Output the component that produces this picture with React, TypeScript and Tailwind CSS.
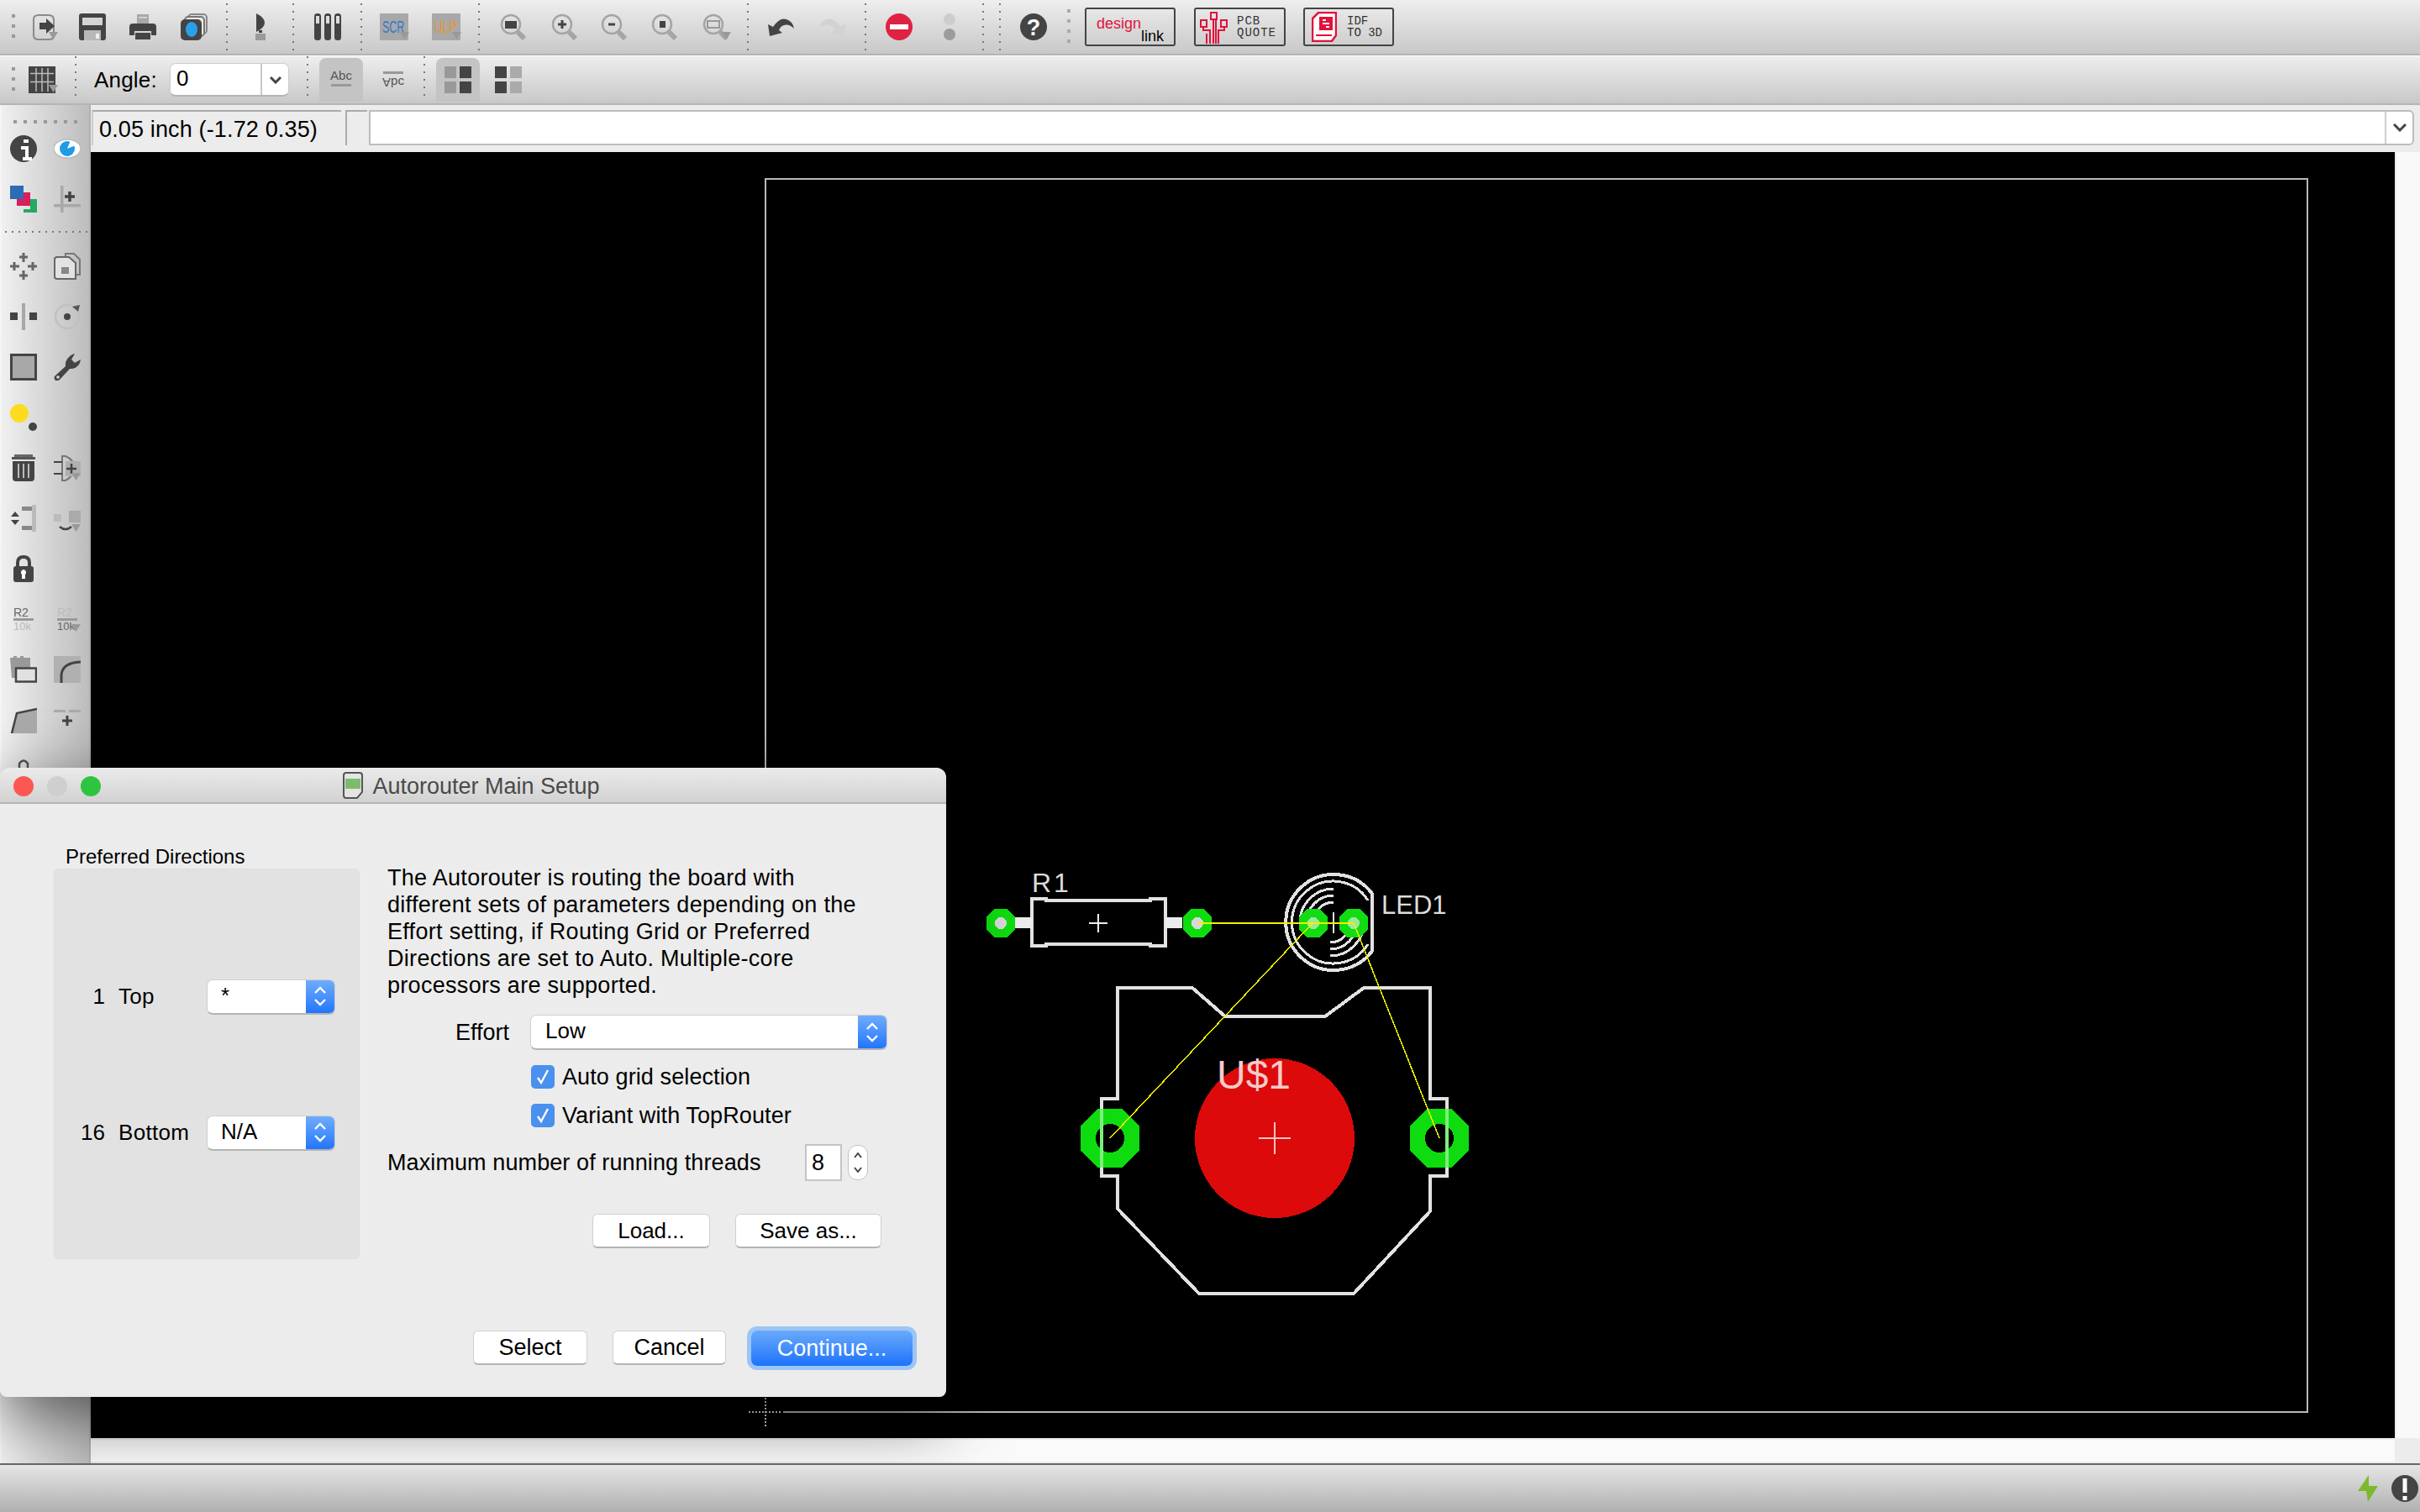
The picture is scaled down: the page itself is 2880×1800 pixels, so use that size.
import type { ReactNode } from 'react';

const DARK = '#444';
const MID = '#a8a8a8';

const Icon = (props: { w?: number, className?: string, children: ReactNode }) => {
  const w = props.w ?? 32;
  return (
    <svg width={w} height={32} viewBox={`0 0 ${w} 32`} className={`block shrink-0 ${props.className ?? ''}`}>
      {props.children}
    </svg>
  );
};

// Toolbar dotted divider
const Sep = (props: { className: string }) => (
  <div className={`w-[2px] h-[56px] self-start mt-[4px] shrink-0 bg-[repeating-linear-gradient(to_bottom,#777_0,#777_2px,transparent_2px,transparent_9px)] ${props.className}`} />
);

const Grip = (props: { className: string }) => (
  <div className={`w-[4px] h-[30px] shrink-0 bg-[repeating-linear-gradient(to_bottom,#999_0,#999_4px,transparent_4px,transparent_12px)] ${props.className}`} />
);

const Arrow = (props: { x: number, y?: number }) => (
  <polygon points={`${props.x},${props.y ?? 22} ${props.x + 11},${props.y ?? 22} ${props.x + 5.5},${(props.y ?? 22) + 9}`} fill="#999" />
);

const ZoomIcon = (props: { className: string, w?: number, arrow?: boolean, children?: ReactNode }) => (
  <Icon w={props.w} className={props.className}>
    <circle cx="14" cy="13" r="11" fill="none" stroke="#a5a5a5" strokeWidth="2.5" />
    <line x1="22" y1="22" x2="30" y2="30" stroke="#a5a5a5" strokeWidth="6" />
    {props.children}
    {props.arrow && <Arrow x={24} />}
  </Icon>
);

const Stepper = () => (
  <svg width="16" height="26" viewBox="0 0 16 26" className="block">
    <path d="M2 9 L8 3 L14 9 M2 17 L8 23 L14 17" fill="none" stroke="white" strokeWidth="2.4" />
  </svg>
);

const Select = (props: { value: string, className: string, textClass: string }) => (
  <div className={`flex h-[42px] rounded-[7px] bg-white border-t border-x border-[#cfcfcf] border-b-2 border-b-[#b4b4b4] overflow-hidden ${props.className}`}>
    <div className={`flex-1 text-[26px] leading-[36px] ${props.textClass}`}>{props.value}</div>
    <div className="w-[34px] -my-[2px] flex items-center justify-center bg-gradient-to-b from-[#72aefc] to-[#1b72fb]">
      <Stepper />
    </div>
  </div>
);

const Check = (props: { label: string, className: string }) => (
  <div className={`flex items-center h-[28px] ml-[171px] ${props.className}`}>
    <div className="w-[28px] h-[28px] rounded-[5px] bg-[#4a90ee] flex items-center justify-center">
      <svg width="20" height="22" viewBox="0 0 20 22"><path d="M4 12 L8 18 L16 3" fill="none" stroke="white" strokeWidth="2.4" /></svg>
    </div>
    <span className="ml-[9px] text-[27px] tracking-[0.1px]">{props.label}</span>
  </div>
);

const Button = (props: { label: string, className: string }) => (
  <div className={`flex items-center justify-center h-[41px] bg-white rounded-[6px] border border-[#d0d0d0] border-b-2 border-b-[#b4b4b4] ${props.className}`}>
    {props.label}
  </div>
);

const TopBar = () => (
  <div className="h-[66px] flex items-center shrink-0 bg-gradient-to-b from-[#eeeeee] to-[#c8c8c8] border-b-[2px] border-b-[#b4b4b4] shadow-[0_2px_0_white]">
    <Grip className="ml-[14px]" />
    {/* open */}
    <Icon className="ml-[20px]">
      <path d="M8 2 H20 Q26 2 26 8 V26 Q26 31 20 31 H8 Q2 31 2 26 V7 Q2 2 8 2 Z" fill="none" stroke="#8a8a8a" strokeWidth="2" />
      <path d="M9 11 H17 V6 L27 15 L17 24 V19 H9 Z" fill={DARK} />
      <Arrow x={20} />
    </Icon>
    {/* save */}
    <Icon className="ml-[24px]">
      <path d="M3 0 H29 Q32 0 32 3 V29 Q32 32 29 32 H3 Q0 32 0 29 V3 Q0 0 3 0 Z" fill={DARK} />
      <rect x="4" y="5" width="24" height="9" fill="#d4d4d4" />
      <rect x="6" y="20" width="20" height="12" fill="#b8b8b8" />
      <rect x="20" y="24" width="4" height="6" fill="#eee" />
    </Icon>
    {/* print */}
    <Icon className="ml-[28px]">
      <rect x="9" y="1" width="14" height="11" fill={MID} />
      <rect x="11" y="4" width="10" height="1.5" fill="#ddd" />
      <path d="M4 12 H28 Q32 12 32 16 V26 H26 V21 H6 V26 H0 V16 Q0 12 4 12 Z" fill={DARK} />
      <rect x="7" y="23" width="18" height="8" fill={DARK} />
    </Icon>
    {/* camera */}
    <Icon className="ml-[29px]">
      <rect x="9" y="1" width="22" height="23" rx="4" fill="none" stroke="#888" strokeWidth="2" />
      <rect x="5" y="4" width="23" height="23" rx="4" fill="#e8e8e8" stroke="#777" strokeWidth="2" />
      <rect x="0" y="7" width="25" height="25" rx="5" fill={DARK} />
      <ellipse cx="13" cy="19" rx="7" ry="9" fill="#2aa0e8" />
    </Icon>
    <Sep className="ml-[22px]" />
    <Icon className="ml-[23px]">
      <path d="M11 0 Q21 5 21 11 Q21 17 11 22 Z" fill={DARK} />
      <rect x="14" y="20" width="4" height="3" fill={DARK} />
      <rect x="10" y="24" width="12" height="8" fill="#999" />
    </Icon>
    <Sep className="ml-[22px]" />
    {/* layers columns */}
    <Icon className="ml-[24px]">
      <rect x="0" y="0" width="8" height="32" rx="3.5" fill={DARK} />
      <rect x="12" y="0" width="8" height="32" rx="3.5" fill={DARK} />
      <rect x="24" y="0" width="8" height="32" rx="3.5" fill={DARK} />
      <rect x="2" y="3" width="4" height="9" fill="#ddd" />
      <rect x="14" y="3" width="4" height="9" fill="#ddd" />
      <rect x="26" y="3" width="4" height="9" fill="#ddd" />
    </Icon>
    <Sep className="ml-[23px]" />
    <Icon w={36} className="ml-[21px]">
      <rect x="0" y="0" width="34" height="32" fill="#a8a8a8" />
      <text transform="translate(3 23) scale(0.62 1)" fontFamily="Liberation Sans" fontSize="20" fill="#2f78cc">SCR</text>
      <Arrow x={24} />
    </Icon>
    <Icon w={36} className="ml-[26px]">
      <rect x="0" y="0" width="34" height="32" fill="#a8a8a8" />
      <text transform="translate(3 23) scale(0.68 1)" fontFamily="Liberation Sans" fontSize="20" fill="#ee9528">ULP</text>
      <Arrow x={24} />
    </Icon>
    <Sep className="ml-[19px]" />
    <ZoomIcon className="ml-[23px]"><rect x="7" y="9" width="14" height="9" fill={DARK} /></ZoomIcon>
    <ZoomIcon className="ml-[29px]">
      <path d="M14 8 V18 M9 13 H19" stroke={DARK} strokeWidth="3" />
    </ZoomIcon>
    <ZoomIcon className="ml-[27px]"><path d="M10 13 H18" stroke={DARK} strokeWidth="3" /></ZoomIcon>
    <ZoomIcon className="ml-[28px]"><rect x="11" y="9" width="7" height="8" fill={DARK} /></ZoomIcon>
    <ZoomIcon className="ml-[29px]" w={36} arrow>
      <rect x="7" y="9" width="14" height="8" fill="none" stroke="#999" strokeWidth="2" />
    </ZoomIcon>
    <Sep className="ml-[18px]" />
    {/* undo / redo */}
    <Icon className="ml-[23px]">
      <path d="M2 27 L0 13 L6 16 Q14 4 22 7 Q30 10 31 18 Q25 12 19 14 Q15 15 13 20 L17 23 Z" fill={DARK} />
    </Icon>
    <Icon className="ml-[28px]">
      <path d="M30 27 L32 13 L26 16 Q18 4 10 7 Q2 10 1 18 Q7 12 13 14 Q17 15 19 20 L15 23 Z" fill="#d2d2d2" />
    </Icon>
    <Sep className="ml-[23px]" />
    <Icon className="ml-[23px]">
      <circle cx="16" cy="16" r="16" fill="#e02242" />
      <rect x="5" y="13" width="22" height="6" fill="white" />
    </Icon>
    <Icon className="ml-[28px]">
      <ellipse cx="16" cy="7" rx="7" ry="7" fill="#cdcdcd" />
      <ellipse cx="16" cy="25" rx="7" ry="7" fill="#9c9c9c" />
    </Icon>
    <Sep className="ml-[23px]" />
    <Sep className="ml-[18px]" />
    <Icon className="ml-[23px]">
      <circle cx="16" cy="16" r="16" fill={DARK} />
      <text x="16" y="26" textAnchor="middle" fontFamily="Liberation Sans" fontWeight="700" fontSize="27" fill="white">?</text>
    </Icon>
    <div className="w-[4px] h-[42px] ml-[24px] shrink-0 bg-[repeating-linear-gradient(to_bottom,#aaa_0,#aaa_4px,transparent_4px,transparent_12px)]" />
    <div className="w-[108px] h-[46px] ml-[17px] shrink-0 border-2 border-[#444] rounded-[3px] flex flex-col px-[12px] [font-size:18px] leading-[16px]">
      <span className="self-start text-[#e0133c] mt-[9px]">design</span>
      <span className="self-end text-black -mt-[1px]">link</span>
    </div>
    <div className="w-[109px] h-[46px] ml-[22px] shrink-0 border-2 border-[#444] rounded-[3px] flex items-center pl-[5px]">
      <svg width="34" height="40" viewBox="0 0 34 40" className="shrink-0">
        <g fill="none" stroke="#e0133c" strokeWidth="2">
          <rect x="13" y="3" width="7" height="8" />
          <rect x="1" y="12" width="7" height="8" />
          <rect x="25" y="12" width="7" height="8" />
          <path d="M16 11 V40 M19 11 V40 M4 20 V24 H12 V40 M29 20 V24 H22 V40 M8 40 V28" />
        </g>
      </svg>
      <div className="ml-[10px] [font-family:'Liberation_Mono',monospace] text-[14px] leading-[14px] tracking-[1px] text-[#333]">PCB<br />QUOTE</div>
    </div>
    <div className="w-[108px] h-[46px] ml-[21px] shrink-0 border-2 border-[#444] rounded-[3px] flex items-center pl-[8px]">
      <svg width="30" height="36" viewBox="0 0 30 36" className="shrink-0">
        <path d="M8 1 H29 V28 L24 35 H1 V8 Z" fill="white" stroke="#e0133c" strokeWidth="2.5" />
        <rect x="9" y="6" width="16" height="16" fill="#e0133c" />
        <path d="M13 10 H17 M13 14 H21 M17 18 H21" stroke="white" strokeWidth="2" />
        <path d="M5 28 H24" stroke="#e0133c" strokeWidth="2" />
      </svg>
      <div className="ml-[12px] [font-family:'Liberation_Mono',monospace] text-[14px] leading-[14px] text-[#333]">IDF<br />TO 3D</div>
    </div>
  </div>
);

const AngleBar = () => (
  <div className="h-[58px] mt-[1px] flex items-center shrink-0 bg-gradient-to-b from-[#eeeeee] to-[#c8c8c8] border-b-[2px] border-b-[#b4b4b4]">
    <Grip className="ml-[14px]" />
    <Icon w={36} className="ml-[16px]">
      <rect x="0" y="0" width="32" height="32" fill={DARK} />
      <path d="M2 8.5 H30 M2 18.5 H30 M9 2 V30 M16 2 V30 M23 2 V30" stroke="#bbb" strokeWidth="1.5" />
      <Arrow x={24} />
    </Icon>
    <Sep className="ml-[19px] !h-[50px] !mt-0" />
    <span className="ml-[21px] text-[26px] w-[75px] tracking-[0.2px]">Angle:</span>
    <div className="ml-[15px] w-[142px] h-[40px] flex rounded-[7px] bg-white border-t border-x border-[#ccc] border-b-2 border-b-[#b4b4b4]">
      <div className="w-[107px] pl-[7px] text-[26px] leading-[34px]">0</div>
      <div className="flex-1 flex items-center justify-center border-l-2 border-[#c8c8c8]">
        <svg width="14" height="10" viewBox="0 0 14 10"><path d="M1 2 L7 8 L13 2" fill="none" stroke={DARK} strokeWidth="3" /></svg>
      </div>
    </div>
    <Sep className="ml-[21px] !h-[50px] !mt-0" />
    <div className="ml-[13px] w-[52px] h-[52px] flex items-center justify-center rounded-t-[8px] bg-[#c4c4c4]">
      <Icon>
        <text x="16" y="16" textAnchor="middle" fontFamily="Liberation Sans" fontSize="15" fill="#555">Abc</text>
        <rect x="4" y="21" width="24" height="3" fill="#999" />
      </Icon>
    </div>
    <Icon className="ml-[20px]">
      <rect x="4" y="6" width="24" height="3" fill="#999" />
      <g transform="translate(0 25) scale(1 -1)">
        <text x="16" y="11" textAnchor="middle" fontFamily="Liberation Sans" fontSize="15" fill="#555">Abc</text>
      </g>
    </Icon>
    <Sep className="ml-[20px] !h-[50px] !mt-0" />
    <div className="ml-[13px] w-[52px] h-[52px] flex items-center justify-center rounded-t-[8px] bg-[#c4c4c4]">
      <Icon>
        <rect x="0" y="0" width="14" height="14" fill="#999" />
        <rect x="18" y="0" width="14" height="14" fill={DARK} />
        <rect x="0" y="18" width="14" height="14" fill="#999" />
        <rect x="18" y="18" width="14" height="14" fill={DARK} />
      </Icon>
    </div>
    <Icon className="ml-[18px]">
      <rect x="0" y="0" width="14" height="14" fill={DARK} />
      <rect x="18" y="0" width="14" height="14" fill="#aaa" />
      <rect x="0" y="18" width="14" height="14" fill={DARK} />
      <rect x="18" y="18" width="14" height="14" fill="#aaa" />
    </Icon>
  </div>
);

const SideTools = () => (
  <div className="w-[108px] shrink-0 overflow-hidden bg-gradient-to-r from-[#f0f0f0] to-[#bdbdbd] border-l-2 border-l-[#f6f6f6] border-r-2 border-r-[#b0b0b0]">
    <div className="mt-[18px] ml-[14px] w-[76px] h-[4px] bg-[repeating-linear-gradient(to_right,#999_0,#999_4px,transparent_4px,transparent_12px)]" />
    <div className="mt-[14px] ml-[10px] grid grid-cols-[32px_32px] gap-x-[20px] gap-y-[28px]">
      <Icon>
        <circle cx="16" cy="16" r="16" fill={DARK} />
        <path d="M16 5 H22 V9 H16 Z M13 13 H22 V26 H26 V30 H15 V26 H18 V17 H13 Z" fill="white" />
      </Icon>
      <Icon>
        <ellipse cx="16" cy="16" rx="16" ry="11" fill="white" stroke="#bbb" strokeWidth="1.5" />
        <circle cx="16" cy="16" r="9" fill="#1f9be6" />
        <path d="M16 16 L20 6 L26 12 Z" fill="white" />
      </Icon>
      <Icon>
        <rect x="0" y="0" width="16" height="16" fill="#2c6cb5" />
        <path d="M16 8 H24 V24 H8 V16 H16 Z" fill="#d81e5b" />
        <path d="M24 16 H32 V32 H16 V28 H24 Z" fill="#27a860" />
      </Icon>
      <Icon>
        <rect x="8" y="0" width="3.5" height="32" fill={MID} />
        <rect x="0" y="22" width="32" height="3.5" fill={MID} />
        <path d="M19 7 V19 M13 13 H25" stroke={DARK} strokeWidth="3.5" />
      </Icon>
    </div>
    <div className="mt-[22px] ml-[4px] w-[98px] h-[2px] bg-[repeating-linear-gradient(to_right,#777_0,#777_2px,transparent_2px,transparent_8px)]" />
    <div className="mt-[24px] ml-[10px] grid grid-cols-[32px_32px] gap-x-[20px] gap-y-[28px]">
      {/* move */}
      <Icon>
        <path d="M16 0 V11 M11 5 H21 M16 21 V32 M11 27 H21 M0 16 H11 M5 11 V21 M21 16 H32 M27 11 V21" stroke="#666" strokeWidth="3" />
      </Icon>
      {/* copy */}
      <Icon>
        <path d="M8 5 H14 V1 H24 L31 8 V26 H26" fill="none" stroke="#777" strokeWidth="2" />
        <path d="M4 5 H18 L26 12 V31 H4 Q1 31 1 28 V8 Q1 5 4 5 Z" fill="#e2e2e2" stroke="#666" strokeWidth="2" />
        <rect x="9" y="17" width="9" height="8" fill="#888" />
      </Icon>
      {/* mirror */}
      <Icon>
        <rect x="14" y="0" width="4" height="32" fill={MID} />
        <rect x="0" y="11" width="9" height="9" fill={DARK} />
        <rect x="23" y="11" width="9" height="9" fill={DARK} />
      </Icon>
      {/* rotate */}
      <Icon>
        <circle cx="16" cy="16" r="14" fill="none" stroke="#c0c0c0" strokeWidth="2.5" />
        <circle cx="16" cy="16" r="4" fill={DARK} />
        <path d="M22 4 L31 2 L29 10 Z" fill="#555" />
      </Icon>
      {/* group */}
      <Icon>
        <rect x="1.5" y="1.5" width="29" height="29" fill={MID} stroke={DARK} strokeWidth="3" />
      </Icon>
      {/* wrench */}
      <Icon>
        <path d="M2 32 Q-1 28 2 26 L14 15 Q13 6 22 1 L25 0 L21 7 L25 11 L32 7 Q31 16 22 18 L19 18 L7 31 Q4 33 2 32 Z" fill={DARK} />
        <circle cx="5" cy="28" r="1.8" fill="#ddd" />
      </Icon>
      {/* yellow dot */}
      <Icon>
        <circle cx="11" cy="11" r="11" fill="#fedb20" />
        <circle cx="27" cy="27" r="5" fill={DARK} />
      </Icon>
      <div />
      {/* trash */}
      <Icon>
        <rect x="5" y="0" width="22" height="3" fill="#666" />
        <rect x="2" y="3" width="28" height="3" fill="#555" />
        <path d="M3 8 H29 V28 Q29 32 25 32 H7 Q3 32 3 28 Z" fill={DARK} />
        <path d="M10 11 V28 M16 11 V28 M22 11 V28" stroke="#bbb" strokeWidth="2" />
      </Icon>
      {/* add */}
      <Icon>
        <path d="M10 2 H14 Q24 6 24 16 Q24 26 14 31 H10 Z" fill="none" stroke="#777" strokeWidth="2" />
        <path d="M0 9 H10 M0 23 H10" stroke={DARK} strokeWidth="2" />
        <rect x="14" y="8" width="18" height="18" fill="#b0b0b0" />
        <path d="M21 11 V23 M15 17 H27" stroke={DARK} strokeWidth="2.5" />
        <Arrow x={21} y={22} />
      </Icon>
      {/* pinswap */}
      <Icon>
        <path d="M6 8 L1 14 H11 Z M6 24 L1 18 H11 Z" fill={DARK} />
        <rect x="14" y="2" width="14" height="5" fill="#888" />
        <rect x="14" y="25" width="14" height="5" fill="#888" />
        <rect x="26" y="0" width="5" height="32" fill="#bbb" />
      </Icon>
      {/* replace */}
      <Icon>
        <rect x="0" y="11" width="9" height="9" fill="#bbb" />
        <rect x="18" y="7" width="14" height="14" fill="#aaa" />
        <path d="M7 26 Q14 32 21 26" fill="none" stroke={DARK} strokeWidth="2.5" />
        <Arrow x={21} y={23} />
      </Icon>
      {/* lock */}
      <Icon>
        <path d="M9 14 V9 Q9 2 16 2 Q23 2 23 9 V14" fill="none" stroke={DARK} strokeWidth="4" />
        <rect x="4" y="13" width="24" height="19" rx="3" fill={DARK} />
        <path d="M16 17 A3.5 3.5 0 0 1 18 23 V28 H14 V23 A3.5 3.5 0 0 1 16 17 Z" fill="white" />
      </Icon>
      <div />
      {/* smash, value */}
      <Icon>
        <text x="4" y="13" fontFamily="Liberation Sans" fontSize="14" fill="#666">R2</text>
        <rect x="4" y="15" width="24" height="3" fill="#999" />
        <text x="4" y="29" fontFamily="Liberation Sans" fontSize="13" fill="#bbb">10k</text>
      </Icon>
      <Icon>
        <text x="4" y="13" fontFamily="Liberation Sans" fontSize="14" fill="#bbb">R2</text>
        <rect x="4" y="15" width="24" height="3" fill="#999" />
        <text x="4" y="29" fontFamily="Liberation Sans" fontSize="13" fill="#666">10k</text>
        <Arrow x={21} />
      </Icon>
      {/* miter */}
      <Icon>
        <path d="M0 2 H4 V0 H8 V2 H12 V0 H16 V2 H24 V14 H8 V26 H2 Z" fill="#999" />
        <rect x="7" y="14.5" width="24" height="16" fill="#e0e0e0" stroke={DARK} strokeWidth="2.5" />
      </Icon>
      <Icon>
        <rect x="0" y="0" width="32" height="32" fill="#b0b0b0" />
        <path d="M9 32 V24 Q9 8 32 7" fill="none" stroke={DARK} strokeWidth="3" />
      </Icon>
      {/* split */}
      <Icon>
        <path d="M8 8 L32 3 V32 H2 Z" fill="#aaa" />
        <path d="M2 32 L8 8 L32 3" fill="none" stroke={DARK} strokeWidth="2.5" />
      </Icon>
      <Icon>
        <rect x="0" y="4" width="14" height="3" fill="#aaa" />
        <rect x="18" y="4" width="14" height="3" fill="#aaa" />
        <path d="M16 11 V23 M10 17 H22" stroke={DARK} strokeWidth="3" />
      </Icon>
      <Icon>
        <path d="M0 17 H5 M11 18 V8 Q16 1 21 8 V18 M26 17 H30" fill="none" stroke="#555" strokeWidth="2.5" />
      </Icon>
    </div>
  </div>
);

const octagon = (cx: number, cy: number, r: number) => {
  const k = r * 0.42;
  return [
    [cx - k, cy - r], [cx + k, cy - r], [cx + r, cy - k], [cx + r, cy + k],
    [cx + k, cy + r], [cx - k, cy + r], [cx - r, cy + k], [cx - r, cy - k],
  ].map((p) => p.join(',')).join(' ');
};

const LED_RADII = [24, 32, 40];

// Coordinates here are page pixels, the viewBox starts where the canvas does
const Board = () => (
  <svg viewBox="108 181 2742 1531" className="block w-[2742px] h-[1531px]" shapeRendering="crispEdges">
    <rect x="911" y="213" width="1835" height="1468" fill="none" stroke="#b8b8b8" strokeWidth="2" />
    {/* Origin cross hides the outline corner */}
    <rect x="889" y="1660" width="43" height="44" fill="black" />
    <path d="M911 1664 V1700 M891 1681 H931" stroke="#dcdcdc" strokeWidth="1.5" strokeDasharray="2 2" />

    {/* U$1 package */}
    <path
      d="M1330 1176 H1419 L1458 1210 H1577 L1623 1176 H1702 V1308 H1722 V1400 H1702 V1442 L1611 1540 H1427 L1330 1439 V1400 H1311 V1308 H1330 Z"
      fill="none"
      stroke="#e2e2e2"
      strokeWidth="4"
    />
    <circle cx="1517" cy="1355" r="95" fill="#dc0a0a" />
    <path d="M1517 1336 V1374 M1498 1355 H1536" stroke="#f4c4c4" strokeWidth="1.5" />
    <text x="1448" y="1296" fontFamily="Liberation Sans" fontSize="48" fill="#f7caca">U$1</text>
    <polygon points={octagon(1321, 1355, 35)} fill="#0fdc0f" />
    <polygon points={octagon(1713, 1355, 35)} fill="#0fdc0f" />
    <circle cx="1321" cy="1355" r="17" fill="black" />
    <circle cx="1713" cy="1355" r="17" fill="black" />
    <path d="M1311 1320 V1390 M1722 1320 V1390" stroke="#7cee7c" strokeWidth="4" />

    {/* R1 */}
    <path
      d="M1228 1126 V1070 H1245 V1072 H1369 V1070 H1387 V1126 H1369 V1124 H1245 V1126 Z"
      fill="none"
      stroke="#e2e2e2"
      strokeWidth="4"
    />
    <rect x="1208" y="1092" width="20" height="13" fill="#ececec" />
    <rect x="1387" y="1092" width="20" height="13" fill="#ececec" />
    <path d="M1307 1088 V1110 M1296 1099 H1318" stroke="#eee" strokeWidth="1.5" />
    <polygon points={octagon(1191, 1099, 17)} fill="#0fdc0f" />
    <polygon points={octagon(1425, 1099, 17)} fill="#0fdc0f" />
    <circle cx="1191" cy="1099" r="7" fill="#d8d8d8" />
    <circle cx="1425" cy="1099" r="7" fill="#d8d8d8" />
    <text x="1228" y="1062" fontFamily="Liberation Sans" fontSize="32" fill="#dcdcdc" letterSpacing="3">R1</text>

    {/* LED1 */}
    <path d="M1633 1064 A57 57 0 1 0 1633 1132 Z" fill="none" stroke="#e2e2e2" strokeWidth="4" />
    <path d="M1628 1072 A49 49 0 1 0 1628 1124" fill="none" stroke="#e2e2e2" strokeWidth="3" />
    {LED_RADII.map((r) => (
      <path
        key={r}
        d={`M${1587 - r} 1098 A${r} ${r} 0 0 1 1587 ${1098 - r} M1583 ${1098 + r} A${r} ${r} 0 0 0 ${1583 + r} 1098`}
        fill="none"
        stroke="#e2e2e2"
        strokeWidth="3"
      />
    ))}
    <path d="M1587 1086 V1111" stroke="#e2e2e2" strokeWidth="2" />
    <polygon points={octagon(1563, 1099, 17)} fill="#12dc12" />
    <polygon points={octagon(1611, 1099, 17)} fill="#12dc12" />
    <circle cx="1563" cy="1099" r="7" fill="#9be89b" />
    <circle cx="1611" cy="1099" r="7" fill="#9be89b" />
    <text x="1644" y="1088" fontFamily="Liberation Sans" fontSize="31" fill="#dcdcdc">LED1</text>

    {/* Airwires */}
    <path d="M1426 1099 H1611 M1562 1099 L1321 1355 M1611 1099 L1713 1355" stroke="#f0f000" strokeWidth="1.5" fill="none" />
  </svg>
);

const SetupDialog = () => (
  <div className="absolute left-0 top-[914px] z-10 w-[1126px] h-[749px] flex flex-col rounded-t-[12px] rounded-b-[8px] bg-[#ececec] text-black shadow-[0_24px_80px_rgba(0,0,0,0.58)]">
    <div className="relative h-[43px] shrink-0 flex items-center justify-center rounded-t-[12px] bg-gradient-to-b from-[#ebebeb] to-[#d2d2d2] border-b-2 border-b-[#b4b4b4]">
      <div className="absolute left-[16px] top-[10px] flex gap-[16px]">
        <div className="w-[24px] h-[24px] rounded-full bg-[#fc5753]" />
        <div className="w-[24px] h-[24px] rounded-full bg-[#cfcfcf]" />
        <div className="w-[24px] h-[24px] rounded-full bg-[#2fc440]" />
      </div>
      <svg width="24" height="32" viewBox="0 0 24 32" className="mr-[11px] ml-[-4px]">
        <path d="M4 1 H20 Q23 1 23 4 V24 L17 31 H4 Q1 31 1 28 V4 Q1 1 4 1 Z" fill="#e4e4e4" stroke="#555" strokeWidth="2" />
        <rect x="3" y="8" width="18" height="12" fill="#7dbb6d" />
      </svg>
      <span className="text-[27px] leading-[36px] pt-[2px] text-[#4a4a4a]">Autorouter Main Setup</span>
    </div>

    <div className="flex-1 flex">
      <div className="ml-[64px] mt-[51px] w-[364px]">
        <div className="pl-[14px] h-[26px] text-[24px] leading-[24px]">Preferred Directions</div>
        <div className="h-[465px] pt-[2px] flex flex-col justify-center gap-[120px] rounded-[6px] bg-[#e2e2e2] border border-[#dedede] text-[26px]">
          <div className="flex items-center h-[42px]">
            <span className="w-[60px] text-right">1</span>
            <span className="ml-[16px] w-[105px] tracking-[0.3px]">Top</span>
            <Select value="*" className="w-[153px]" textClass="pl-[16px]" />
          </div>
          <div className="flex items-center h-[42px]">
            <span className="w-[60px] text-right">16</span>
            <span className="ml-[16px] w-[105px] tracking-[0.3px]">Bottom</span>
            <Select value="N/A" className="w-[153px]" textClass="pl-[16px]" />
          </div>
        </div>
      </div>

      <div className="ml-[33px] mt-[72px] w-[620px]">
        <p className="text-[27px] leading-[32px] tracking-[0.3px] w-[600px]">
          The Autorouter is routing the board with<br />
          different sets of parameters depending on the<br />
          Effort setting, if Routing Grid or Preferred<br />
          Directions are set to Auto. Multiple-core<br />
          processors are supported.
        </p>
        <div className="mt-[19px] flex items-center">
          <span className="w-[145px] text-right text-[27px]">Effort</span>
          <Select value="Low" className="ml-[25px] w-[425px]" textClass="pl-[17px]" />
        </div>
        <Check label="Auto grid selection" className="mt-[18px]" />
        <Check label="Variant with TopRouter" className="mt-[18px]" />
        <div className="mt-[20px] flex items-center h-[44px] text-[27px] tracking-[0.1px]">
          <span className="w-[497px]">Maximum number of running threads</span>
          <div className="w-[44px] h-[44px] pl-[6px] leading-[40px] bg-white border-2 border-[#c4c4c4]">8</div>
          <div className="ml-[7px] w-[24px] h-[42px] rounded-[11px] bg-white border border-[#c4c4c4] flex items-center justify-center">
            <svg width="12" height="28" viewBox="0 0 12 28"><path d="M2 8 L6 3 L10 8 M2 20 L6 25 L10 20" fill="none" stroke="#444" strokeWidth="2" /></svg>
          </div>
        </div>
        <div className="mt-[39px] ml-[244px] flex gap-[30px]">
          <Button label="Load..." className="w-[140px] text-[26px]" />
          <Button label="Save as..." className="w-[174px] text-[26px]" />
        </div>
      </div>
    </div>

    <div className="flex justify-end gap-[30px] pr-[40px] pb-[37px]">
      <Button label="Select" className="w-[136px] text-[27px]" />
      <Button label="Cancel" className="w-[135px] text-[27px]" />
      <div className="w-[192px] h-[42px] flex items-center justify-center rounded-[7px] bg-gradient-to-b from-[#68a9fb] to-[#1b72fb] text-white text-[27px] shadow-[0_0_0_5px_#9cc5f5]">
        Continue...
      </div>
    </div>
  </div>
);

export default function App() {
  return (
    <div className="relative w-[2880px] h-[1800px] overflow-hidden flex flex-col bg-[#ececec] text-black [font-family:'Liberation_Sans',Arial,sans-serif]">
      <TopBar />
      <AngleBar />

      <div className="flex-1 flex min-h-0">
        <SideTools />

        <div className="flex-1 flex flex-col min-w-0">
          <div className="h-[56px] shrink-0 flex items-start bg-[#ececec] pt-[6px]">
            <div className="w-[297px] h-[42px] ml-[1px] pl-[7px] border-t-2 border-t-[#aaa] border-l-2 border-l-[#ccc] text-[27px] tracking-[0.15px] leading-[42px]">0.05 inch (-1.72 0.35)</div>
            <div className="w-[26px] h-[42px] ml-[5px] border-t-2 border-l-2 border-[#aaa]" />
            <div className="w-[2434px] h-[42px] ml-[2px] flex bg-white border-y-2 border-l-2 border-[#bdbdbd] border-r-2 rounded-r-[6px]">
              <div className="flex-1" />
              <div className="w-[33px] flex items-center justify-center border-l-2 border-[#cfcfcf]">
                <svg width="16" height="10" viewBox="0 0 16 10"><path d="M1 1 L8 8 L15 1" fill="none" stroke={DARK} strokeWidth="3" /></svg>
              </div>
            </div>
          </div>

          <div className="flex-1 flex min-h-0">
            <div className="w-[2742px] bg-black">
              <Board />
            </div>
            <div className="flex-1 bg-[#f9f9f9] border-l-2 border-[#ececec]" />
          </div>

          <div className="h-[30px] shrink-0 flex bg-[#ececec] pt-[2px] pb-[2px]">
            <div className="w-[2742px] bg-[#fafafa]" />
          </div>
        </div>
      </div>

      <SetupDialog />

      <div className="relative z-20 h-[58px] shrink-0 flex items-center justify-end pr-[2px] border-t-2 border-t-[#666] bg-gradient-to-b from-[#e6e6e6] to-[#b0b0b0]">
        <svg width="26" height="32" viewBox="0 0 26 32" className="block">
          <path d="M14 0 L1 19 H11 L13 32 L25 13 H14 Z" fill="#7cb92e" />
        </svg>
        <svg width="32" height="32" viewBox="0 0 32 32" className="block ml-[15px]">
          <circle cx="16" cy="16" r="16" fill={DARK} />
          <rect x="13.5" y="4" width="5" height="17" fill="white" />
          <rect x="13.5" y="25" width="5" height="5" fill="white" />
        </svg>
      </div>
    </div>
  );
}
